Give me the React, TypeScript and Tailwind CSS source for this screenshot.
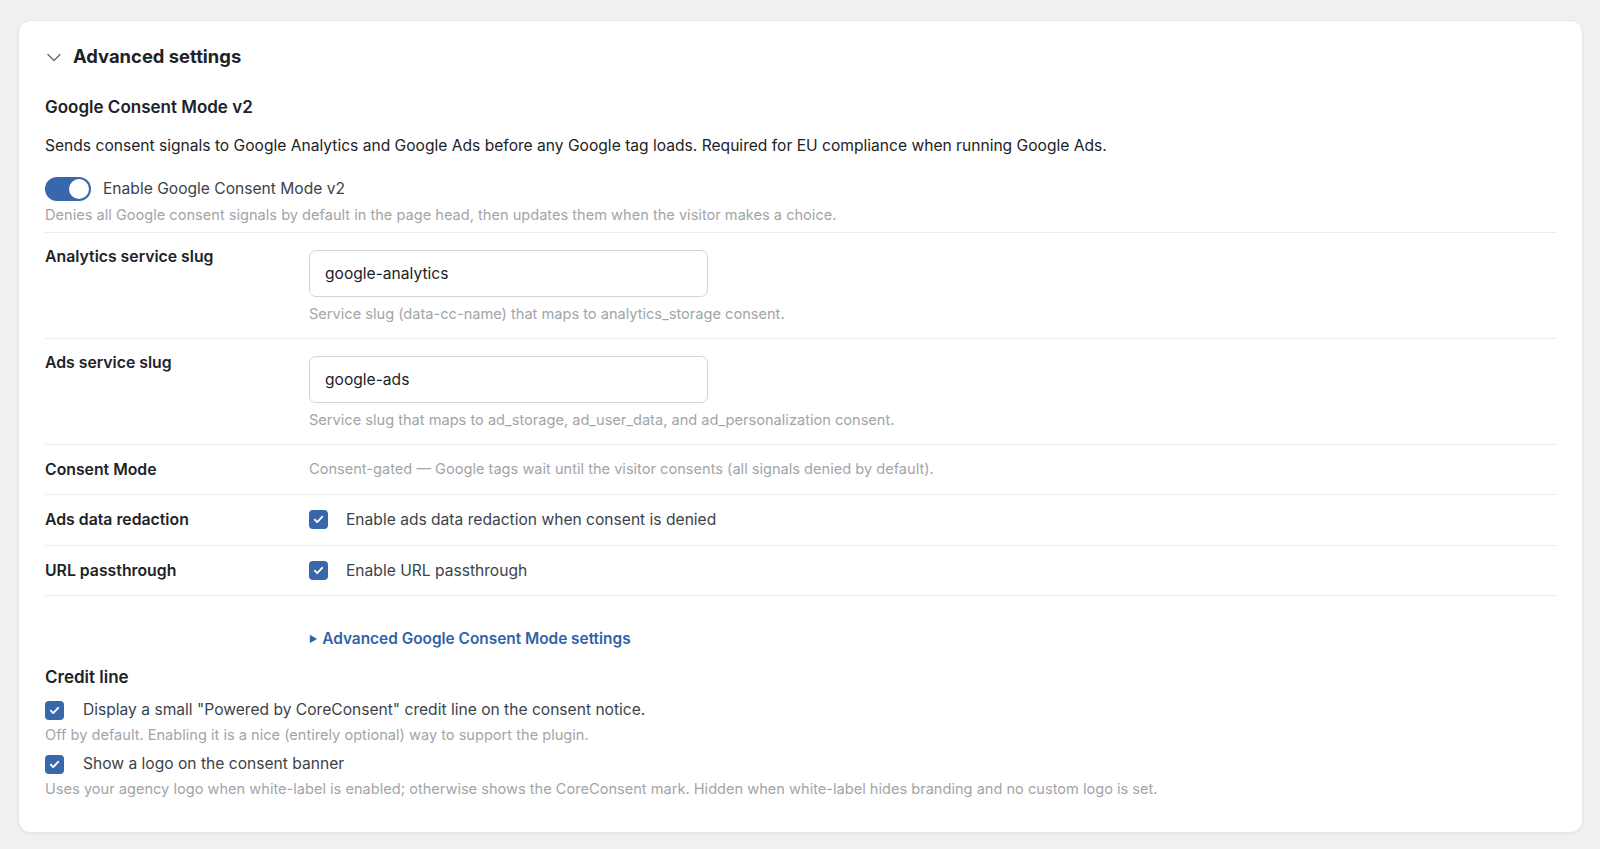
import React from 'react';

const BLUE = 'bg-[#3867ac]';

function Check() {
  return (
    <span className={`inline-flex items-center justify-center w-[19px] h-[19px] rounded-[4px] ${BLUE} shrink-0`}>
      <svg width="13" height="13" viewBox="0 0 12 12" fill="none">
        <path d="M2.6 6.2l2.2 2.2 4.6-4.9" stroke="white" strokeWidth={1.7} strokeLinecap="round" strokeLinejoin="round" />
      </svg>
    </span>
  );
}

function Toggle() {
  return (
    <span className={`relative inline-block w-[46px] h-[24px] rounded-full ${BLUE} shrink-0`}>
      <span className="absolute right-[2px] top-[2px] w-[20px] h-[20px] rounded-full bg-white" />
    </span>
  );
}

function SlugRow({ label, value, help }: { label: string; value: string; help: string }) {
  return (
    <div className="flex border-b border-[#ececec] pb-[14px]">
      <div className="w-[264px] shrink-0 pt-[14px] text-[15.8px] leading-[20px] font-semibold text-[#1d2327]">{label}</div>
      <div className="pt-[17px]">
        <div className="w-[399px] h-[47px] rounded-[7px] border border-[#d4d4d4] flex items-center px-[15px] text-[15.6px] text-[#1d2327]">
          {value}
        </div>
        <div className="mt-[7px] text-[14.6px] leading-[20px] text-[#a2a5a8]">{help}</div>
      </div>
    </div>
  );
}

function SimpleRow({ label, h, children }: { label: string; h: string; children: React.ReactNode }) {
  return (
    <div className={`flex items-center border-b border-[#ececec] ${h}`}>
      <div className="w-[264px] shrink-0 text-[15.8px] leading-[20px] font-semibold text-[#1d2327]">{label}</div>
      <div className="flex items-center">{children}</div>
    </div>
  );
}

export default function App() {
  return (
    <div className="min-h-screen bg-[#f0f0f0] pt-[20px] pl-[18px] pr-[17px] pb-[16px]" style={{ fontFamily: 'Inter, "Noto Sans", sans-serif' }}>
      <div className="bg-white rounded-[12px] border border-[#e6e6e6] shadow-[0_1px_2px_rgba(0,0,0,0.05)] px-[26px] pt-[22px] pb-[33px]">
        {/* Header */}
        <div className="flex items-center h-[28px]">
          <svg width="16" height="16" viewBox="0 0 16 16" fill="none" className="ml-[1px]">
            <path d="M2 5.5l6 6 6-6" stroke="#6b6f74" strokeWidth={1.5} strokeLinecap="round" strokeLinejoin="round" />
          </svg>
          <h2 className="ml-[11px] text-[18.4px] font-bold text-[#1d2327]">Advanced settings</h2>
        </div>

        <h3 className="mt-[24px] text-[17px] leading-[24px] font-semibold text-[#1d2327]">Google Consent Mode v2</h3>
        <p className="mt-[15px] text-[15.6px] leading-[24px] text-[#1d2327]">
          Sends consent signals to Google Analytics and Google Ads before any Google tag loads. Required for EU compliance when running Google Ads.
        </p>

        <div className="border-b border-[#ececec] pb-[7px]">
          <div className="mt-[19px] flex items-center h-[24px]">
            <Toggle />
            <span className="ml-[12px] text-[15.6px] text-[#3c434a]">Enable Google Consent Mode v2</span>
          </div>
          <div className="mt-[4px] text-[14.6px] leading-[20px] text-[#a2a5a8]">
            Denies all Google consent signals by default in the page head, then updates them when the visitor makes a choice.
          </div>
        </div>

        <SlugRow label="Analytics service slug" value="google-analytics" help="Service slug (data-cc-name) that maps to analytics_storage consent." />
        <SlugRow label="Ads service slug" value="google-ads" help="Service slug that maps to ad_storage, ad_user_data, and ad_personalization consent." />

        <SimpleRow label="Consent Mode" h="h-[50px]">
          <span className="text-[14.6px] text-[#a2a5a8]">Consent-gated — Google tags wait until the visitor consents (all signals denied by default).</span>
        </SimpleRow>
        <SimpleRow label="Ads data redaction" h="h-[51px]">
          <Check />
          <span className="ml-[18px] text-[15.6px] text-[#3c434a]">Enable ads data redaction when consent is denied</span>
        </SimpleRow>
        <SimpleRow label="URL passthrough" h="h-[50px]">
          <Check />
          <span className="ml-[18px] text-[15.6px] text-[#3c434a]">Enable URL passthrough</span>
        </SimpleRow>

        <div className="mt-[33px] pl-[264px] flex items-center h-[20px]">
          <span className="text-[9px] text-[#2f63a8]">▶</span>
          <span className="ml-[5px] text-[15.4px] font-semibold text-[#2f63a8]">Advanced Google Consent Mode settings</span>
        </div>

        <h3 className="mt-[16px] text-[17px] leading-[24px] font-semibold text-[#1d2327]">Credit line</h3>
        <div className="mt-[9px] flex items-center h-[24px]">
          <Check />
          <span className="ml-[19px] text-[15.6px] text-[#3c434a]">Display a small "Powered by CoreConsent" credit line on the consent notice.</span>
        </div>
        <div className="mt-[3px] text-[14.6px] leading-[20px] text-[#a2a5a8]">
          Off by default. Enabling it is a nice (entirely optional) way to support the plugin.
        </div>
        <div className="mt-[7px] flex items-center h-[24px]">
          <Check />
          <span className="ml-[19px] text-[15.6px] text-[#3c434a]">Show a logo on the consent banner</span>
        </div>
        <div className="mt-[3px] text-[14.6px] leading-[20px] text-[#a2a5a8]">
          Uses your agency logo when white-label is enabled; otherwise shows the CoreConsent mark. Hidden when white-label hides branding and no custom logo is set.
        </div>
      </div>
    </div>
  );
}
